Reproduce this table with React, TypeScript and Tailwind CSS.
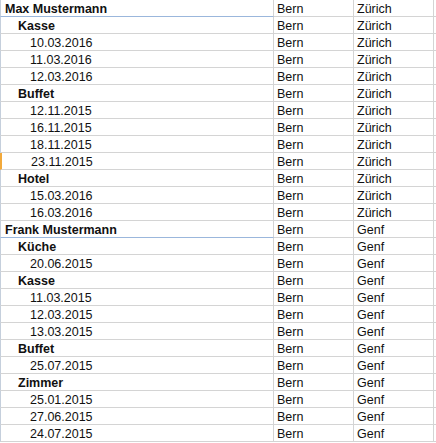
type Row = { label: string; level: 0 | 1 | 2; b: string; c: string; mark?: boolean };

const groups: { name: string; c: string; cats: { name: string; dates: string[] }[] }[] = [
  {
    name: "Max Mustermann",
    c: "Zürich",
    cats: [
      { name: "Kasse", dates: ["10.03.2016", "11.03.2016", "12.03.2016"] },
      { name: "Buffet", dates: ["12.11.2015", "16.11.2015", "18.11.2015", "23.11.2015"] },
      { name: "Hotel", dates: ["15.03.2016", "16.03.2016"] },
    ],
  },
  {
    name: "Frank Mustermann",
    c: "Genf",
    cats: [
      { name: "Küche", dates: ["20.06.2015"] },
      { name: "Kasse", dates: ["11.03.2015", "12.03.2015", "13.03.2015"] },
      { name: "Buffet", dates: ["25.07.2015"] },
      { name: "Zimmer", dates: ["25.01.2015", "27.06.2015", "24.07.2015"] },
    ],
  },
];

const rows: Row[] = [];
groups.forEach((g) => {
  rows.push({ label: g.name, level: 0, b: "Bern", c: g.c });
  g.cats.forEach((cat) => {
    rows.push({ label: cat.name, level: 1, b: "Bern", c: g.c });
    cat.dates.forEach((d) =>
      rows.push({ label: d, level: 2, b: "Bern", c: g.c, mark: d === "23.11.2015" })
    );
  });
});

const indent = ["pl-[4px] font-bold", "pl-[17px] font-bold", "pl-[29px]"];

export default function App() {
  return (
    <div
      className="w-[436px] h-[443px] overflow-hidden bg-white text-[12.5px] text-[#111]"
      style={{ fontFamily: '"Liberation Sans", Arial, sans-serif' }}
    >
      {rows.map((r, i) => (
        <div key={i} className="flex h-[17px]">
          <div
            className={`w-[274px] shrink-0 border-r border-[#d4d4d4] border-b ${
              r.level === 0 ? "border-b-[#9bb7dc]" : "border-b-[#d4d4d4]"
            } ${r.mark ? "border-l-2 border-l-[#f2a93b]" : "border-l border-l-[#c5cfdc]"} ${indent[r.level]} pt-[2px] leading-[14px]`}
          >
            {r.label}
          </div>
          <div className="w-[80px] shrink-0 border-r border-b border-[#d4d4d4] pl-[3px] pt-[2px] leading-[14px]">
            {r.b}
          </div>
          <div className="w-[80px] shrink-0 border-r border-b border-[#d4d4d4] pl-[3px] pt-[2px] leading-[14px]">
            {r.c}
          </div>
          <div className="flex-1 border-b border-[#d4d4d4]" />
        </div>
      ))}
    </div>
  );
}
